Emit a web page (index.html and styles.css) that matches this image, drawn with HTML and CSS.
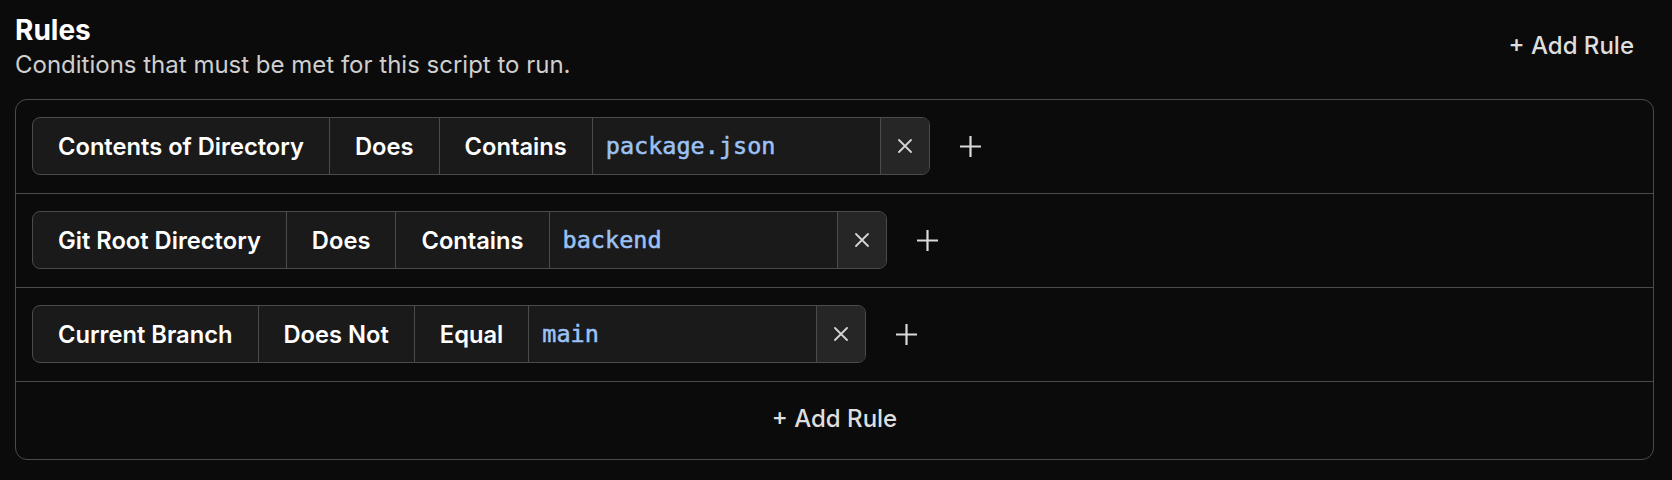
FILE: index.html
```html
<!DOCTYPE html>
<html lang="en">
<head>
<meta charset="utf-8">
<title>Rules</title>
<link rel="stylesheet" href="styles.css">
</head>
<body>
<div class="page">
  <header class="header">
    <div class="heading">
      <h1 class="title">Rules</h1>
      <p class="subtitle">Conditions that must be met for this script to run.</p>
    </div>
    <button class="add-btn" type="button">+ Add Rule</button>
  </header>

  <div class="rules">
    <div class="rule-row">
      <div class="chip">
        <div class="seg">Contents of Directory</div>
        <div class="seg">Does</div>
        <div class="seg">Contains</div>
        <div class="seg value">package.json</div>
        <div class="seg remove">
          <svg width="14" height="14" viewBox="0 0 14 14"><path d="M1 1 L13 13 M13 1 L1 13" stroke="#d4d4d4" stroke-width="1.8" stroke-linecap="round" fill="none"/></svg>
        </div>
      </div>
      <svg class="plus" width="21" height="21" viewBox="0 0 21 21"><path d="M10.5 0.5 V20.5 M0.5 10.5 H20.5" stroke="#dadada" stroke-width="2.2" stroke-linecap="round" fill="none"/></svg>
    </div>

    <div class="rule-row">
      <div class="chip">
        <div class="seg">Git Root Directory</div>
        <div class="seg">Does</div>
        <div class="seg">Contains</div>
        <div class="seg value">backend</div>
        <div class="seg remove">
          <svg width="14" height="14" viewBox="0 0 14 14"><path d="M1 1 L13 13 M13 1 L1 13" stroke="#d4d4d4" stroke-width="1.8" stroke-linecap="round" fill="none"/></svg>
        </div>
      </div>
      <svg class="plus" width="21" height="21" viewBox="0 0 21 21"><path d="M10.5 0.5 V20.5 M0.5 10.5 H20.5" stroke="#dadada" stroke-width="2.2" stroke-linecap="round" fill="none"/></svg>
    </div>

    <div class="rule-row">
      <div class="chip">
        <div class="seg">Current Branch</div>
        <div class="seg">Does Not</div>
        <div class="seg">Equal</div>
        <div class="seg value">main</div>
        <div class="seg remove">
          <svg width="14" height="14" viewBox="0 0 14 14"><path d="M1 1 L13 13 M13 1 L1 13" stroke="#d4d4d4" stroke-width="1.8" stroke-linecap="round" fill="none"/></svg>
        </div>
      </div>
      <svg class="plus" width="21" height="21" viewBox="0 0 21 21"><path d="M10.5 0.5 V20.5 M0.5 10.5 H20.5" stroke="#dadada" stroke-width="2.2" stroke-linecap="round" fill="none"/></svg>
    </div>

    <div class="add-row">
      <button class="add-btn" type="button">+ Add Rule</button>
    </div>
  </div>
</div>
</body>
</html>
```

FILE: styles.css
```css
* { box-sizing: border-box; }

html, body {
  margin: 0;
  padding: 0;
  background: #0b0b0b;
}

body {
  font-family: Inter, "Noto Sans", "Liberation Sans", sans-serif;
  color: #ffffff;
}

.page {
  padding: 14px 18px 0 15px;
}

.header {
  display: flex;
  justify-content: space-between;
  align-items: center;
}

.title {
  margin: 0 0 4px 0;
  font-size: 28px;
  line-height: 32px;
  font-weight: 700;
  color: #ffffff;
}

.subtitle {
  margin: 0;
  font-size: 24px;
  line-height: 30px;
  font-weight: 400;
  color: #cfcfcf;
}

.add-btn {
  background: none;
  border: none;
  padding: 4px 20px 6px;
  font-family: inherit;
  font-size: 24px;
  line-height: 30px;
  font-weight: 500;
  color: #dedede;
  cursor: pointer;
}

.rules {
  margin-top: 19px;
  border: 1px solid #4b4b4b;
  border-radius: 12px;
}

.rule-row {
  display: flex;
  align-items: center;
  padding: 17px 16px 18px;
  border-bottom: 1px solid #4b4b4b;
}

.chip {
  display: flex;
  height: 58px;
  border: 1px solid #4b4b4b;
  border-radius: 8px;
  background: #1a1a1a;
  overflow: hidden;
}

.seg {
  display: flex;
  align-items: center;
  padding: 0 25px;
  font-size: 23.7px;
  font-weight: 600;
  color: #ffffff;
  white-space: nowrap;
}

.seg + .seg {
  border-left: 1px solid #4b4b4b;
}

.seg.value {
  width: 288px;
  padding: 0 13px;
  font-family: "DejaVu Sans Mono", "Liberation Mono", monospace;
  font-size: 23.5px;
  font-weight: 400;
  -webkit-text-stroke: 0.5px #9cc2f5;
  color: #9cc2f5;
}

.seg.remove {
  width: 49px;
  padding: 0;
  justify-content: center;
  background: #262626;
}

.plus {
  margin-left: 30px;
  display: block;
}

.add-row {
  display: flex;
  justify-content: center;
  align-items: center;
  height: 77px;
  padding-bottom: 2px;
}
```
